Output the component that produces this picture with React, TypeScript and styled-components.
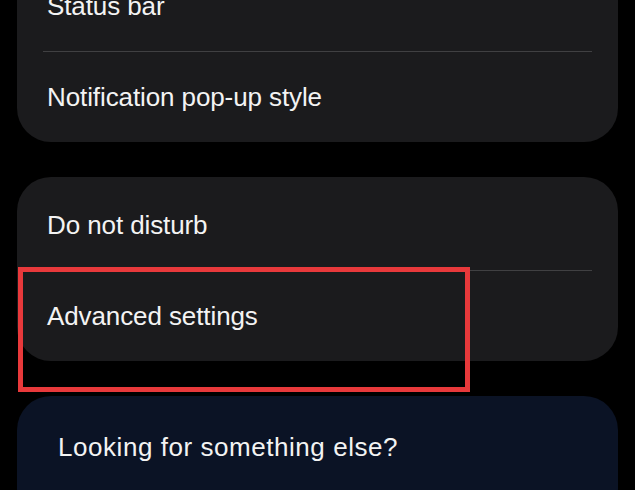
import React from 'react';
import styled, { createGlobalStyle } from 'styled-components';

const GlobalStyle = createGlobalStyle`
  html, body {
    margin: 0;
    padding: 0;
    background: #000;
    overflow: hidden;
  }
  body {
    font-family: "Liberation Sans", Arial, sans-serif;
  }
`;

const Page = styled.div`
  width: 635px;
  height: 490px;
  overflow: hidden;
  background: #000;
`;

const Stack = styled.div`
  display: flex;
  flex-direction: column;
  gap: 35px;
  padding: 0 17px;
  margin-top: -42px;
`;

const Card = styled.div<{ tone?: 'gray' | 'navy' }>`
  background: ${p => (p.tone === 'navy' ? '#0b1325' : '#1b1b1d')};
  border-radius: 34px;
  padding-top: 3px;
  display: flex;
  flex-direction: column;
`;

const Row = styled.div`
  padding: 30px 30px;
  font-size: 26px;
  line-height: 30px;
  color: #f3f3f3;
  letter-spacing: -0.1px;
`;

const Divider = styled.div`
  height: 1px;
  margin: 0 26px;
  background: #404042;
`;

const Highlighted = styled.div`
  position: relative;
`;

const RedBox = styled.div`
  position: absolute;
  left: 1px;
  top: 90px;
  width: 452px;
  height: 125px;
  box-sizing: border-box;
  border: 5px solid #e8393b;
  pointer-events: none;
`;

const Prompt = styled.div`
  padding: 33px 41px 60px;
  font-size: 26px;
  line-height: 30px;
  color: #f3f3f3;
  letter-spacing: 0.55px;
`;

export default function App() {
  return (
    <Page>
      <GlobalStyle />
      <Stack>
        <Card>
          <Row>Status bar</Row>
          <Divider />
          <Row>Notification pop-up style</Row>
        </Card>
        <Highlighted>
          <Card>
            <Row>Do not disturb</Row>
            <Divider />
            <Row>Advanced settings</Row>
          </Card>
          <RedBox />
        </Highlighted>
        <Card tone="navy">
          <Prompt>Looking for something else?</Prompt>
        </Card>
      </Stack>
    </Page>
  );
}
